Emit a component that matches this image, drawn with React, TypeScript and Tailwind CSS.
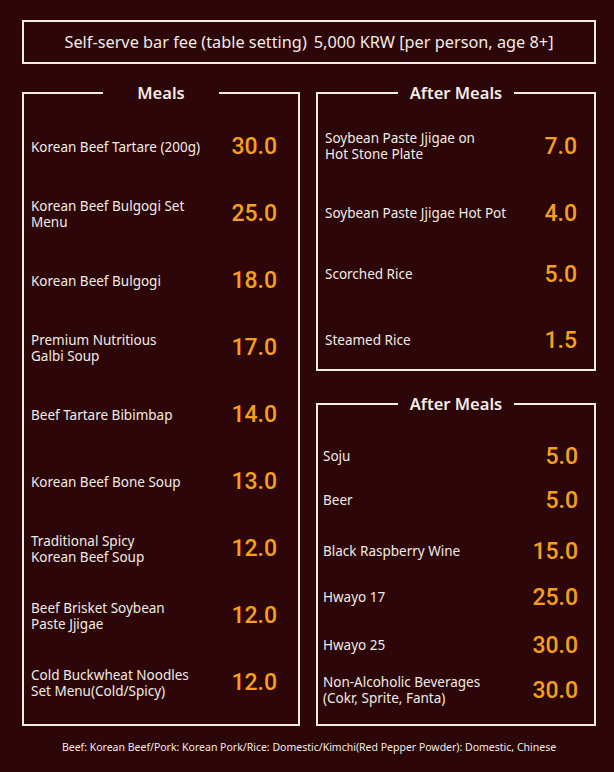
import { ReactNode } from 'react';

type Item = { name: ReactNode; price: string; cls?: string };

const meals: Item[] = [
  { name: 'Korean Beef Tartare (200g)', price: '30.0' },
  { name: <>Korean Beef Bulgogi Set<br />Menu</>, price: '25.0' },
  { name: 'Korean Beef Bulgogi', price: '18.0' },
  { name: <>Premium Nutritious<br />Galbi Soup</>, price: '17.0' },
  { name: 'Beef Tartare Bibimbap', price: '14.0' },
  { name: 'Korean Beef Bone Soup', price: '13.0' },
  { name: <>Traditional Spicy<br />Korean Beef Soup</>, price: '12.0' },
  { name: <>Beef Brisket Soybean<br />Paste Jjigae</>, price: '12.0' },
  { name: <>Cold Buckwheat Noodles<br />Set Menu(Cold/Spicy)</>, price: '12.0' },
];

const afterMeals: Item[] = [
  { name: <>Soybean Paste Jjigae on<br />Hot Stone Plate</>, price: '7.0', cls: 'mt-[21px]' },
  { name: 'Soybean Paste Jjigae Hot Pot', price: '4.0', cls: 'mt-[23px]' },
  { name: 'Scorched Rice', price: '5.0', cls: 'mt-[17px]' },
  { name: 'Steamed Rice', price: '1.5', cls: 'mt-[22px]' },
];

const drinks: Item[] = [
  { name: 'Soju', price: '5.0', cls: 'mt-[20px]' },
  { name: 'Beer', price: '5.0', cls: 'mt-0' },
  { name: 'Black Raspberry Wine', price: '15.0', cls: 'mt-[7px]' },
  { name: 'Hwayo 17', price: '25.0', cls: 'mt-[2px]' },
  { name: 'Hwayo 25', price: '30.0', cls: 'mt-[4px]' },
  { name: <>Non-Alcoholic Beverages<br />(Cokr, Sprite, Fanta)</>, price: '30.0', cls: 'mt-[1px]' },
];

function Price({ value }: { value: string }) {
  return (
    <span className="font-['Roboto',sans-serif] font-medium text-[23px] leading-none text-[#f5a01c]">
      {value}
    </span>
  );
}

function Section({ title, className, children }: { title: string; className?: string; children: ReactNode }) {
  return (
    <fieldset className={`border-2 border-[#f3ece4] m-0 p-0 min-w-0 ${className ?? ''}`}>
      <legend className="mx-auto w-[116px] p-0 text-center text-[16.5px] leading-[20px] font-semibold text-[#f3ece4]">
        {title}
      </legend>
      {children}
    </fieldset>
  );
}

export default function App() {
  return (
    <div className="w-[614px] h-[772px] bg-[#2c0608] text-[#f2ebe4] font-['Noto_Sans',sans-serif] pt-[20px] pl-[22px]">
      {/* Fee banner */}
      <div className="w-[574px] h-[44px] border-2 border-[#f3ece4] flex items-center justify-center gap-[7px] text-[16.3px]">
        <span>Self-serve bar fee (table setting)</span>
        <span>5,000 KRW [per person, age 8+]</span>
      </div>

      <div className="flex gap-[16px] mt-[19px] w-[574px]">
        {/* Meals */}
        <Section title="Meals" className="w-[278px] h-[643px] pt-[10px]">
          {meals.map((m, i) => (
            <div key={i} className="h-[67px] flex items-center pl-[7px] pr-[21px]">
              <div className="flex-1 text-[13.5px] leading-[16px]">{m.name}</div>
              <Price value={m.price} />
            </div>
          ))}
        </Section>

        <div className="w-[280px] flex flex-col">
          <Section title="After Meals" className="h-[288px]">
            {afterMeals.map((m, i) => (
              <div key={i} className={`h-[44px] flex items-center pl-[7px] pr-[17px] ${m.cls}`}>
                <div className="flex-1 text-[13.5px] leading-[16px]">{m.name}</div>
                <Price value={m.price} />
              </div>
            ))}
          </Section>

          <Section title="After Meals" className="h-[332px] mt-[23px]">
            {drinks.map((m, i) => (
              <div key={i} className={`h-[44px] flex items-center pl-[5px] pr-[16px] ${m.cls}`}>
                <div className="flex-1 text-[13.5px] leading-[16px]">{m.name}</div>
                <Price value={m.price} />
              </div>
            ))}
          </Section>
        </div>
      </div>

      <p className="w-[574px] mt-[14px] text-center text-[10.5px] leading-[14px]">
        Beef: Korean Beef/Pork: Korean Pork/Rice: Domestic/Kimchi(Red Pepper Powder): Domestic, Chinese
      </p>
    </div>
  );
}
